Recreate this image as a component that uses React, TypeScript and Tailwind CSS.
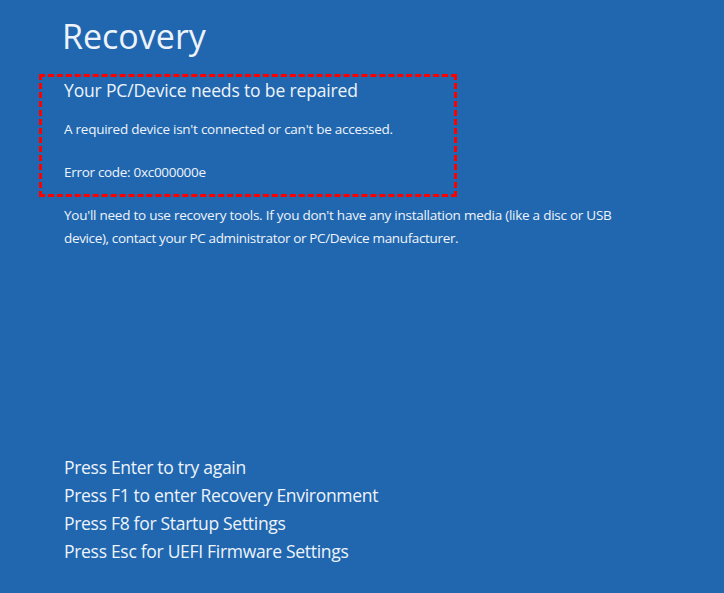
export default function App() {
    const options = [
        "Press Enter to try again",
        "Press F1 to enter Recovery Environment",
        "Press F8 for Startup Settings",
        "Press Esc for UEFI Firmware Settings",
    ];

    return (
        <div className="w-[724px] h-[593px] bg-[#2067b0] text-[#eef3fa] pl-[39px] pt-[16px] overflow-hidden font-['Open_Sans',sans-serif]">
            <h1 className="pl-[23px] text-[34px] leading-[40px]">Recovery</h1>

            <div className="mt-[18px] w-[418px] border-[3px] border-dashed border-[#ff0000] px-[22px] pt-[1px] pb-[12px]">
                <h2 className="text-[17.5px] leading-[24px] tracking-[-0.15px]">Your PC/Device needs to be repaired</h2>
                <p className="mt-[17px] text-[13.5px] leading-[20px] tracking-[-0.25px]">
                    A required device isn't connected or can't be accessed.
                </p>
                <p className="mt-[23px] text-[13.5px] leading-[20px] tracking-[-0.3px]">Error code: 0xc000000e</p>
            </div>

            <p className="mt-[7px] pl-[25px] text-[13.5px] leading-[23px] tracking-[-0.25px]">
                You'll need to use recovery tools. If you don't have any installation media (like a disc or USB
                <br />
                <span className="tracking-[-0.35px]">device), contact your PC administrator or PC/Device manufacturer.</span>
            </p>

            <div className="mt-[203px] pl-[25px] flex flex-col">
                {options.map((item) => (
                    <p key={item} className="text-[17.5px] leading-[28px] tracking-[-0.3px]">{item}</p>
                ))}
            </div>
        </div>
    );
}
